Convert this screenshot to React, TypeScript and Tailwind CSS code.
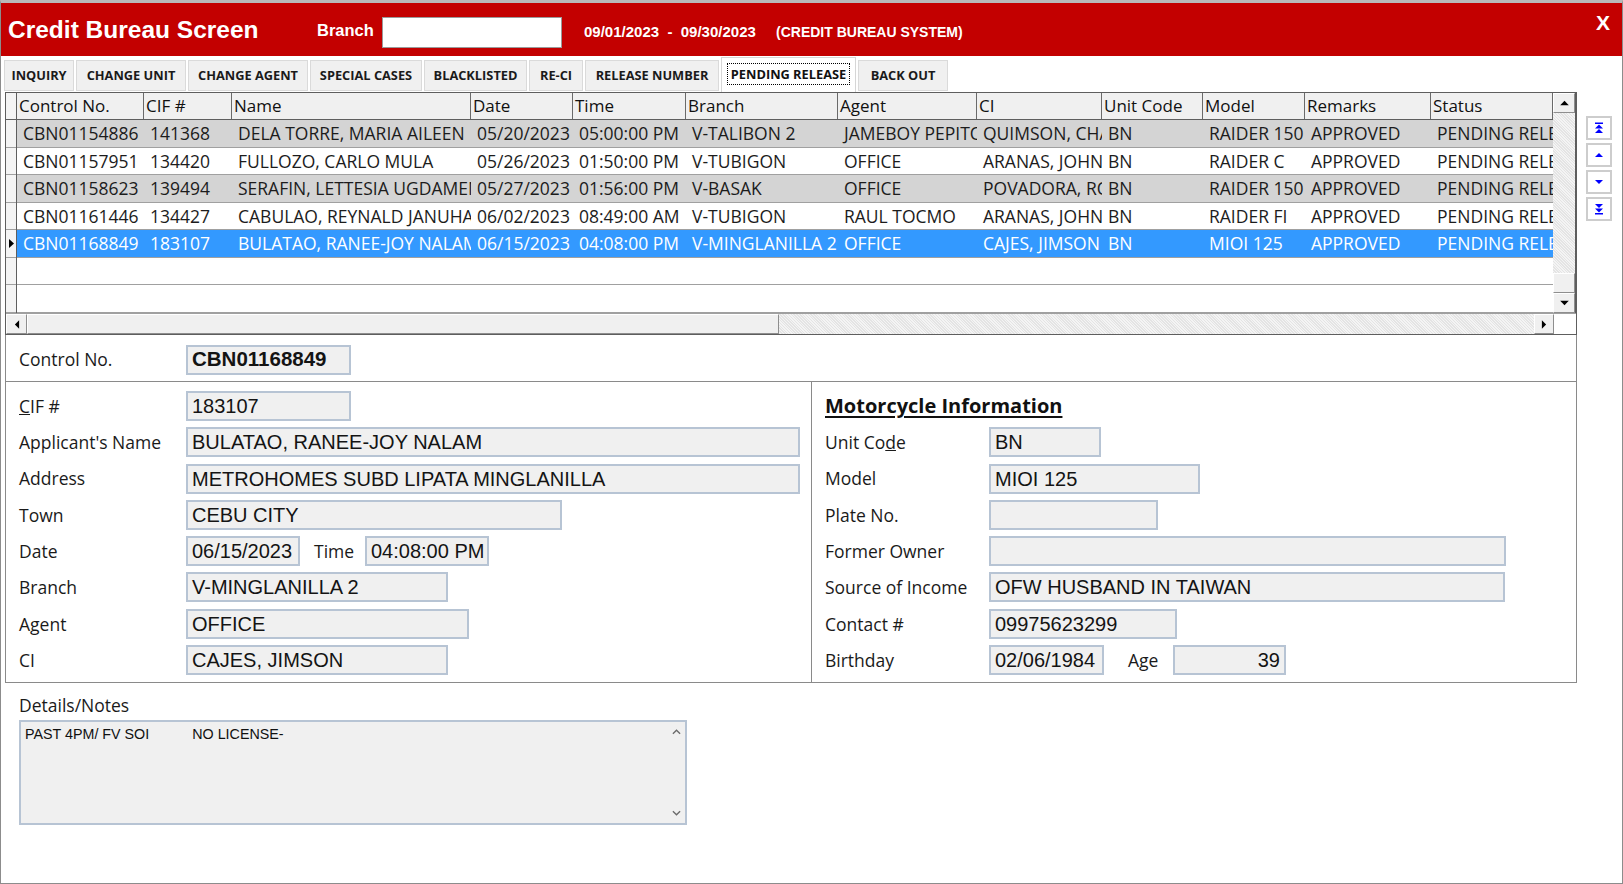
import React from "react"

const columns = [
  { title: "Control No.", w: "w-[127px]" },
  { title: "CIF #", w: "w-[88px]" },
  { title: "Name", w: "w-[239px]" },
  { title: "Date", w: "w-[102px]" },
  { title: "Time", w: "w-[113px]" },
  { title: "Branch", w: "w-[152px]" },
  { title: "Agent", w: "w-[139px]" },
  { title: "CI", w: "w-[125px]" },
  { title: "Unit Code", w: "w-[101px]" },
  { title: "Model", w: "w-[102px]" },
  { title: "Remarks", w: "w-[126px]" },
  { title: "Status", w: "w-[122px]" },
]

const records = [
  ["CBN01154886", "141368", "DELA TORRE, MARIA AILEEN", "05/20/2023", "05:00:00 PM", "V-TALIBON 2", "JAMEBOY PEPITO", "QUIMSON, CHARLIE", "BN", "RAIDER 150", "APPROVED", "PENDING RELEASE"],
  ["CBN01157951", "134420", "FULLOZO, CARLO MULA", "05/26/2023", "01:50:00 PM", "V-TUBIGON", "OFFICE", "ARANAS, JOHN", "BN", "RAIDER C", "APPROVED", "PENDING RELEASE"],
  ["CBN01158623", "139494", "SERAFIN, LETTESIA UGDAMEN", "05/27/2023", "01:56:00 PM", "V-BASAK", "OFFICE", "POVADORA, ROMEO", "BN", "RAIDER 150", "APPROVED", "PENDING RELEASE"],
  ["CBN01161446", "134427", "CABULAO, REYNALD JANUHAN", "06/02/2023", "08:49:00 AM", "V-TUBIGON", "RAUL TOCMO", "ARANAS, JOHN", "BN", "RAIDER FI", "APPROVED", "PENDING RELEASE"],
  ["CBN01168849", "183107", "BULATAO, RANEE-JOY NALAM", "06/15/2023", "04:08:00 PM", "V-MINGLANILLA 2", "OFFICE", "CAJES, JIMSON", "BN", "MIOI 125", "APPROVED", "PENDING RELEASE"],
]

const rowBg = ["bg-[#d4d4d4] text-[#1c1c1c]", "bg-white text-[#1c1c1c]", "bg-[#d4d4d4] text-[#1c1c1c]", "bg-white text-[#1c1c1c]", "bg-[#3399ff] text-white"]

const tabs = [
  { label: "INQUIRY", w: "w-[70px]" },
  { label: "CHANGE UNIT", w: "w-[110px]" },
  { label: "CHANGE AGENT", w: "w-[120px]" },
  { label: "SPECIAL CASES", w: "w-[112px]" },
  { label: "BLACKLISTED", w: "w-[103px]" },
  { label: "RE-CI", w: "w-[54px]" },
  { label: "RELEASE NUMBER", w: "w-[134px]" },
  { label: "PENDING RELEASE", w: "w-[135px]", active: true },
  { label: "BACK OUT", w: "w-[90px]" },
]

function Tri({ dir }: { dir: "up" | "down" | "left" | "right" }) {
  const pts = {
    up: "0,6 5,1 10,6",
    down: "0,1 5,6 10,1",
    left: "6,0 1,5 6,10",
    right: "1,0 6,5 1,10",
  }[dir]
  const box = dir === "up" || dir === "down" ? "0 0 10 7" : "0 0 7 10"
  const size = dir === "up" || dir === "down" ? "w-[9px] h-[6px]" : "w-[6px] h-[9px]"
  return (
    <svg viewBox={box} className={size}>
      <polygon points={pts} fill="#000" />
    </svg>
  )
}

function ScrollBtn({ dir, className }: { dir: "up" | "down" | "left" | "right"; className: string }) {
  return (
    <div className={`${className} shrink-0 flex items-center justify-center bg-[#f0f0f0] border border-t-white border-l-white border-r-[#8e8e8e] border-b-[#8e8e8e]`}>
      <Tri dir={dir} />
    </div>
  )
}

function NavIcon({ kind }: { kind: "first" | "prev" | "next" | "last" }) {
  if (kind === "prev") return <svg viewBox="0 0 10 10" className="w-[10px] h-[10px]"><polygon points="1,7 5,3 9,7" fill="#0000ff" /></svg>
  if (kind === "next") return <svg viewBox="0 0 10 10" className="w-[10px] h-[10px]"><polygon points="1,3 5,7 9,3" fill="#0000ff" /></svg>
  if (kind === "first")
    return (
      <svg viewBox="0 0 10 12" className="w-[10px] h-[12px]">
        <rect x="1" y="0.5" width="8" height="1.5" fill="#0000ff" />
        <polygon points="1,6.5 5,2.5 9,6.5" fill="#0000ff" />
        <polygon points="1,11 5,7 9,11" fill="#0000ff" />
      </svg>
    )
  return (
    <svg viewBox="0 0 10 12" className="w-[10px] h-[12px]">
      <polygon points="1,1 5,5 9,1" fill="#0000ff" />
      <polygon points="1,5.5 5,9.5 9,5.5" fill="#0000ff" />
      <rect x="1" y="10" width="8" height="1.5" fill="#0000ff" />
    </svg>
  )
}

function Field({ w, value, bold, right }: { w: string; value?: string; bold?: boolean; right?: boolean }) {
  return (
    <div
      className={`${w} h-[30px] shrink-0 border-2 border-[#b7c4d4] bg-[#f0f0f0] flex items-center px-[4px] font-['Liberation_Sans',Arial,sans-serif] text-[#141414] whitespace-nowrap overflow-hidden ${right ? "justify-end" : ""} ${bold ? "font-bold text-[20.5px]" : "text-[20px]"}`}
    >
      {value}
    </div>
  )
}

function Row({ label, labelW, children }: { label: React.ReactNode; labelW: string; children: React.ReactNode }) {
  return (
    <div className="flex items-center h-[30px]">
      <div className={`${labelW} shrink-0 text-[17.5px] text-[#1a1a1a]`}>{label}</div>
      {children}
    </div>
  )
}

export default function App() {
  return (
    <div className="w-[1623px] h-[884px] bg-white border border-[#8c8c8c] border-t-[3px] border-t-[#b9b9b9] flex flex-col font-['Open_Sans',sans-serif] overflow-hidden">
      {/* title bar */}
      <div className="h-[53px] shrink-0 bg-[#c30000] flex items-center pl-[7px] pr-[12px] text-white font-['Liberation_Sans',Arial,sans-serif]">
        <div className="w-[309px] shrink-0 text-[24.5px] font-bold mt-[2px]">Credit Bureau Screen</div>
        <div className="w-[65px] shrink-0 text-[16.5px] font-bold mt-[1px]">Branch</div>
        <div className="w-[180px] h-[31px] shrink-0 bg-white border border-[#9a9a9a] mt-[6px]" />
        <div className="ml-[22px] w-[192px] shrink-0 text-[15px] font-bold whitespace-pre mt-[6px]">09/01/2023  -  09/30/2023</div>
        <div className="text-[14px] font-bold mt-[6px]">(CREDIT BUREAU SYSTEM)</div>
        <div className="ml-auto text-[21px] font-bold mb-[14px]">X</div>
      </div>

      {/* tabs */}
      <div className="h-[36px] shrink-0 flex items-end gap-[2px] pl-[3px] pb-[1px]">
        {tabs.map((t) =>
          t.active ? (
            <div key={t.label} className={`${t.w} h-[35px] mb-[-1px] bg-white border border-[#d6d6d6] border-b-0 flex items-center justify-center`}>
              <span className="border border-dotted border-black px-[3px] leading-[20px] text-[12.8px] font-bold text-[#111] mb-[3px]">{t.label}</span>
            </div>
          ) : (
            <div key={t.label} className={`${t.w} h-[31px] bg-[#f0f0f0] border border-[#dadada] flex items-center justify-center text-[12.8px] font-bold text-[#1a1a1a]`}>
              {t.label}
            </div>
          )
        )}
      </div>

      {/* main frame */}
      <div className="flex pl-[4px]">
        <div className="w-[1572px] shrink-0 flex flex-col">
          {/* grid */}
          <div className="h-[243px] border border-[#5e5e5e] flex flex-col">
            <div className="h-[220px] flex">
              <div className="w-[11px] shrink-0 flex flex-col border-r border-[#5e5e5e] bg-[#f4f4f4]">
                <div className="h-[27px] shrink-0 border-b border-[#5e5e5e]" />
                {[0, 1, 2, 3, 4, 5, 6].map((i) => (
                  <div key={i} className="h-[27.5px] shrink-0 border-b border-[#a0a0a0] flex items-center justify-center">
                    {i === 4 ? <svg viewBox="0 0 5 9" className="w-[5px] h-[9px]"><polygon points="0,0 5,4.5 0,9" fill="#000" /></svg> : null}
                  </div>
                ))}
              </div>
              <div className="w-[1536px] shrink-0 flex flex-col overflow-hidden">
                <div className="h-[27px] shrink-0 flex bg-[#f0f0f0] border-b border-[#5e5e5e]">
                  {columns.map((c) => (
                    <div key={c.title} className={`${c.w} shrink-0 border-r border-[#6a6a6a] pl-[2px] flex items-center text-[17px] text-[#111] whitespace-nowrap overflow-hidden`}>
                      {c.title}
                    </div>
                  ))}
                </div>
                {records.map((r, ri) => (
                  <div key={r[0]} className={`h-[27.5px] shrink-0 flex border-b border-[#a0a0a0] ${rowBg[ri]}`}>
                    {r.map((v, ci) => (
                      <div key={ci} className={`${columns[ci].w} shrink-0 pl-[6px] flex items-center text-[17.5px] whitespace-nowrap overflow-hidden`}>
                        {v}
                      </div>
                    ))}
                  </div>
                ))}
                <div className="h-[27.5px] shrink-0 border-b border-[#a0a0a0]" />
                <div className="h-[27.5px] shrink-0 border-b border-[#a0a0a0]" />
              </div>
              <div className="w-[23px] shrink-0 flex flex-col bg-[#ececec] border-r border-[#5e5e5e]">
                <ScrollBtn dir="up" className="w-[22px] h-[20px]" />
                <div className="flex-1 bg-[repeating-linear-gradient(45deg,#e4e4e4_0px,#e4e4e4_1px,#f4f4f4_1px,#f4f4f4_2px)]" />
                <div className="h-[20px] w-[22px] shrink-0 bg-[#f0f0f0] border border-t-white border-l-white border-r-[#8e8e8e] border-b-[#8e8e8e]" />
                <ScrollBtn dir="down" className="w-[22px] h-[20px]" />
              </div>
            </div>
            <div className="h-[21px] shrink-0 flex border-t border-[#a0a0a0]">
              <ScrollBtn dir="left" className="w-[21px] h-[20px]" />
              <div className="w-[752px] shrink-0 h-[20px] bg-[#f0f0f0] border border-t-white border-l-white border-r-[#8e8e8e] border-b-[#8e8e8e]" />
              <div className="flex-1 bg-[repeating-linear-gradient(45deg,#e4e4e4_0px,#e4e4e4_1px,#f4f4f4_1px,#f4f4f4_2px)]" />
              <ScrollBtn dir="right" className="w-[20px] h-[20px]" />
              <div className="w-[22px] shrink-0 bg-white" />
            </div>
          </div>

          {/* control no */}
          <div className="h-[47px] border-l border-r border-b border-[#8a8a8a] flex items-center pl-[13px] pt-[3px]">
            <Row label="Control No." labelW="w-[167px]">
              <Field w="w-[165px]" value="CBN01168849" bold />
            </Row>
          </div>

          {/* panels */}
          <div className="h-[301px] flex border-l border-r border-b border-[#8a8a8a]">
            <div className="w-[806px] shrink-0 border-r border-[#8a8a8a] pl-[13px] pt-[9px] flex flex-col gap-[6.3px]">
              <Row label={<span><span className="underline">C</span>IF #</span>} labelW="w-[167px]">
                <Field w="w-[165px]" value="183107" />
              </Row>
              <Row label="Applicant's Name" labelW="w-[167px]">
                <Field w="w-[614px]" value="BULATAO, RANEE-JOY NALAM" />
              </Row>
              <Row label="Address" labelW="w-[167px]">
                <Field w="w-[614px]" value="METROHOMES SUBD LIPATA MINGLANILLA" />
              </Row>
              <Row label="Town" labelW="w-[167px]">
                <Field w="w-[376px]" value="CEBU CITY" />
              </Row>
              <Row label="Date" labelW="w-[167px]">
                <Field w="w-[114px]" value="06/15/2023" />
                <div className="ml-[14px] w-[51px] shrink-0 text-[17.5px] text-[#1a1a1a]">Time</div>
                <Field w="w-[124px]" value="04:08:00 PM" />
              </Row>
              <Row label="Branch" labelW="w-[167px]">
                <Field w="w-[262px]" value="V-MINGLANILLA 2" />
              </Row>
              <Row label="Agent" labelW="w-[167px]">
                <Field w="w-[283px]" value="OFFICE" />
              </Row>
              <Row label="CI" labelW="w-[167px]">
                <Field w="w-[262px]" value="CAJES, JIMSON" />
              </Row>
            </div>
            <div className="flex-1 pl-[13px] pt-[9px] flex flex-col gap-[6.3px]">
              <div className="h-[30px] flex items-center">
                <span className="text-[20px] font-bold underline underline-offset-[3px] text-[#111]">Motorcycle Information</span>
              </div>
              <Row label={<span>Unit Co<span className="underline">d</span>e</span>} labelW="w-[164px]">
                <Field w="w-[112px]" value="BN" />
              </Row>
              <Row label="Model" labelW="w-[164px]">
                <Field w="w-[211px]" value="MIOI 125" />
              </Row>
              <Row label="Plate No." labelW="w-[164px]">
                <Field w="w-[169px]" />
              </Row>
              <Row label="Former Owner" labelW="w-[164px]">
                <Field w="w-[517px]" />
              </Row>
              <Row label="Source of Income" labelW="w-[164px]">
                <Field w="w-[516px]" value="OFW HUSBAND IN TAIWAN" />
              </Row>
              <Row label="Contact #" labelW="w-[164px]">
                <Field w="w-[188px]" value="09975623299" />
              </Row>
              <Row label="Birthday" labelW="w-[164px]">
                <Field w="w-[115px]" value="02/06/1984" />
                <div className="ml-[24px] w-[45px] shrink-0 text-[17.5px] text-[#1a1a1a]">Age</div>
                <Field w="w-[113px]" value="39" right />
              </Row>
            </div>
          </div>
        </div>

        {/* record navigation */}
        <div className="ml-[9px] mt-[24px] flex flex-col gap-[3px]">
          {(["first", "prev", "next", "last"] as const).map((k) => (
            <div key={k} className="w-[26px] h-[24px] border-2 border-[#cdcdcd] bg-white flex items-center justify-center">
              <NavIcon kind={k} />
            </div>
          ))}
        </div>
      </div>

      {/* notes */}
      <div className="pl-[18px] pt-[12px]">
        <div className="h-[20px] flex items-center text-[17.5px] text-[#1a1a1a]">Details/Notes</div>
        <div className="mt-[5px] w-[668px] h-[105px] border-2 border-[#b7c4d4] bg-[#f0f0f0] flex">
          <div className="flex-1 pl-[4px] pt-[2px] font-['Liberation_Sans',Arial,sans-serif] text-[14.3px] text-[#111] whitespace-pre">
            <span>PAST 4PM/ FV SOI</span>
            <span className="ml-[43px]">NO LICENSE-</span>
          </div>
          <div className="w-[18px] flex flex-col items-center justify-between py-[7px] text-[#6b6b6b]">
            <svg viewBox="0 0 10 6" className="w-[9px] h-[6px]"><polyline points="1,5 5,1 9,5" fill="none" stroke="#6b6b6b" strokeWidth="1.5" /></svg>
            <svg viewBox="0 0 10 6" className="w-[9px] h-[6px]"><polyline points="1,1 5,5 9,1" fill="none" stroke="#6b6b6b" strokeWidth="1.5" /></svg>
          </div>
        </div>
      </div>
    </div>
  )
}
